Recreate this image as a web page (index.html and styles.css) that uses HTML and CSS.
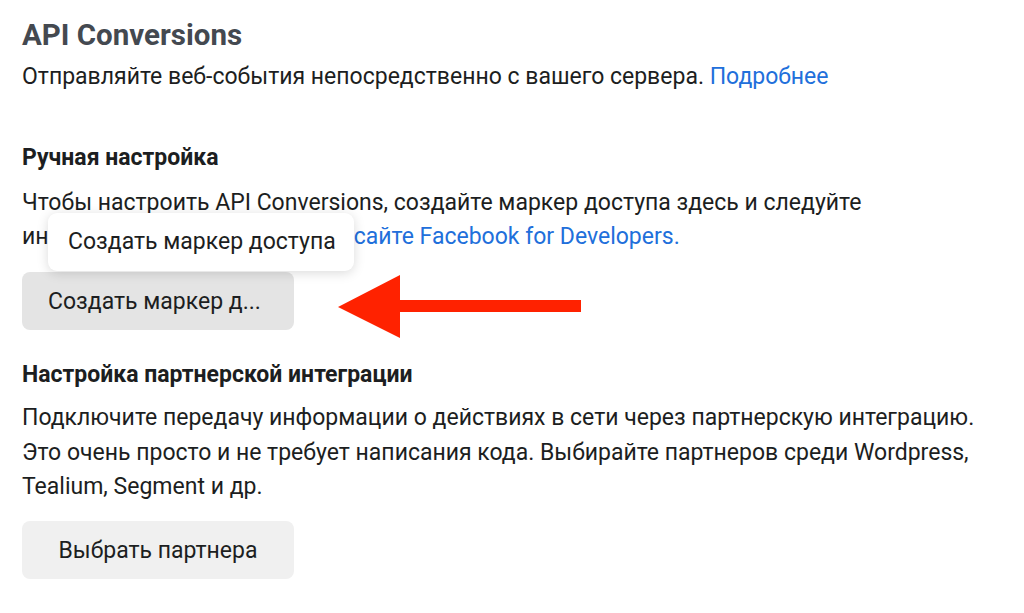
FILE: index.html
```html
<!DOCTYPE html>
<html lang="ru">
<head>
<meta charset="utf-8">
<link rel="stylesheet" href="styles.css">
</head>
<body>
<div class="page">
  <h1 class="title">API Conversions</h1>
  <p class="lead">Отправляйте веб-события непосредственно с вашего сервера. <a class="link" href="#">Подробнее</a></p>

  <section class="section manual">
    <h2 class="heading">Ручная настройка</h2>
    <p class="text">Чтобы настроить API Conversions, создайте маркер доступа здесь и следуйте инструкциям в документах на <a class="link" href="#">сайте Facebook for Developers.</a></p>
    <div class="btn-wrap">
      <button class="btn btn-hover">Создать маркер д...</button>
      <div class="tooltip">Создать маркер доступа</div>
      <svg class="arrow" width="250" height="66" viewBox="0 0 250 66">
        <polygon points="0,32 62,0 62,25 243,25 243,37 62,37 62,63" fill="#ff2200"/>
      </svg>
    </div>
  </section>

  <section class="section partner">
    <h2 class="heading">Настройка партнерской интеграции</h2>
    <p class="text">Подключите передачу информации о действиях в сети через партнерскую интеграцию. Это очень просто и не требует написания кода. Выбирайте партнеров среди Wordpress, Tealium, Segment и др.</p>
    <button class="btn btn-wide">Выбрать партнера</button>
  </section>
</div>
</body>
</html>
```
FILE: styles.css
```css
* { box-sizing: border-box; }
html, body { margin: 0; padding: 0; background: #fff; }
body {
  font-family: Roboto, "Noto Sans", Arial, sans-serif;
  color: #1c1e21;
  width: 1024px;
  height: 613px;
  overflow: hidden;
}
.page {
  padding: 17px 0 0 22px;
}
.title {
  margin: 0;
  font-size: 29.5px;
  line-height: 36px;
  font-weight: 700;
  color: #444950;
}
.lead {
  margin: 7px 0 0;
  font-size: 23px;
  line-height: 34px;
}
.link {
  color: #216fdb;
  text-decoration: none;
}
.manual { margin-top: 49px; }
.heading {
  margin: 0;
  font-size: 23px;
  line-height: 30px;
  font-weight: 700;
  color: #1c1e21;
}
.text {
  margin: 13px 0 0;
  font-size: 23px;
  line-height: 34px;
  max-width: 955px;
}
.manual .text { max-width: 860px; }
.btn-wrap {
  position: relative;
  margin-top: 18px;
  width: 272px;
}
.btn {
  display: block;
  border: none;
  border-radius: 8px;
  height: 58px;
  width: 272px;
  font-family: Roboto, "Noto Sans", Arial, sans-serif;
  font-size: 23px;
  color: #1c1e21;
  background: #f0f0f0;
  padding: 0 26px;
  text-align: left;
  white-space: nowrap;
}
.btn-hover { background: #e4e4e4; }
.btn-wide { text-align: center; margin-top: 16.5px; padding: 0; }
.tooltip {
  position: absolute;
  left: 26px;
  top: -59px;
  width: 306px;
  height: 58px;
  background: #fff;
  border-radius: 9px;
  box-shadow: 0 2px 12px rgba(0,0,0,0.15);
  font-size: 23px;
  line-height: 58px;
  padding-left: 20px;
  color: #1c1e21;
  white-space: nowrap;
}
.arrow {
  position: absolute;
  left: 316px;
  top: 3px;
}
.partner { margin-top: 30px; }
.partner .text { margin-top: 11px; line-height: 34.5px; }
```
